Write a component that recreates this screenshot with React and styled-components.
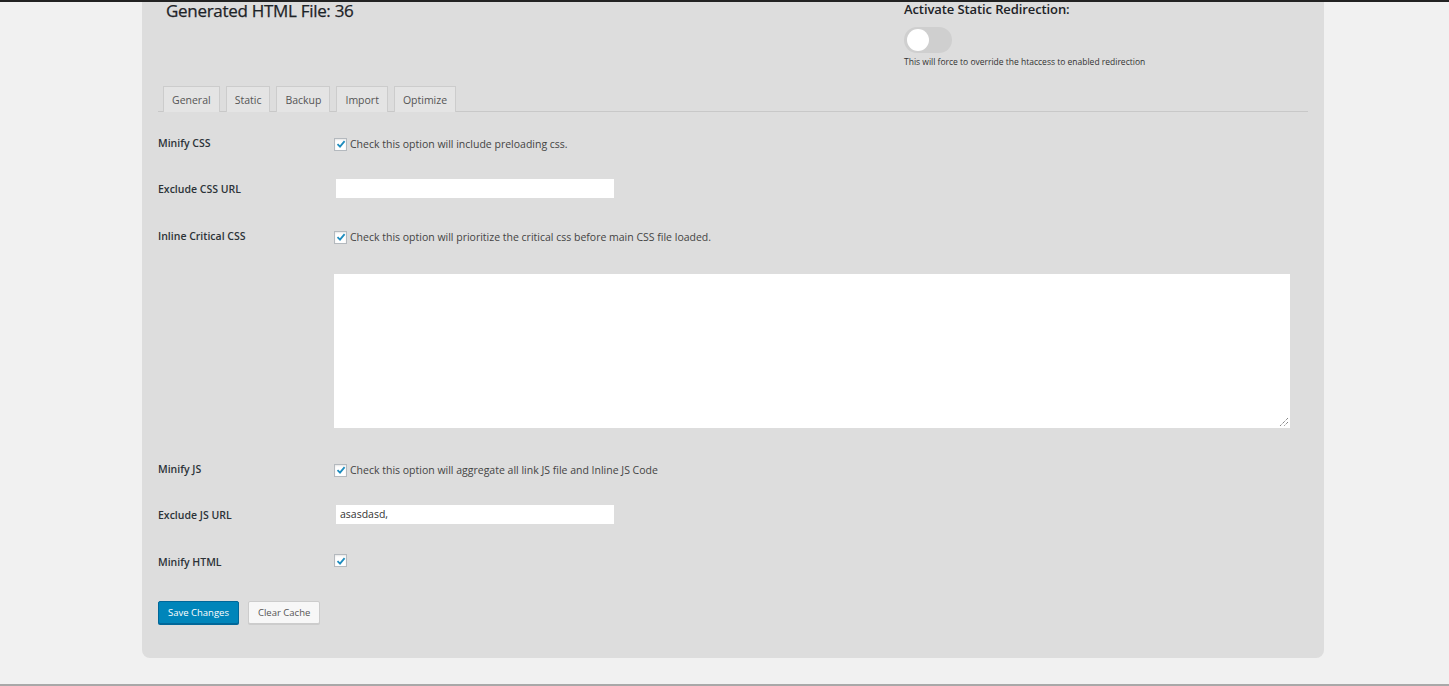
import React from "react";
import styled, { createGlobalStyle } from "styled-components";

const GlobalStyle = createGlobalStyle`
  html, body {
    margin: 0;
    padding: 0;
    background: #f1f1f1;
    font-family: "Open Sans", "Noto Sans", sans-serif;
    color: #23282d;
  }
`;

const Page = styled.div`
  height: 686px;
  box-sizing: border-box;
  border-top: 2px solid #222;
  border-bottom: 2px solid #a8a8a8;
  background: #f1f1f1;
  display: flex;
  flex-direction: column;
`;

const Panel = styled.div`
  margin-left: 142px;
  width: 1182px;
  height: 656px;
  box-sizing: border-box;
  background: #dddddd;
  border-radius: 0 0 8px 8px;
  padding: 0 16px 0 16px;
  display: flex;
  flex-direction: column;
`;

const Head = styled.div`
  display: flex;
  height: 82px;
`;

const Title = styled.h2`
  margin: 0;
  padding: 0 0 0 8px;
  width: 738px;
  font-size: 17px;
  font-weight: 400;
  line-height: 18px;
  letter-spacing: -0.3px;
  color: #1d2327;
  -webkit-text-stroke: 0.25px #1d2327;
`;

const Redirect = styled.div`
  display: flex;
  flex-direction: column;
`;

const RedirectTitle = styled.div`
  font-size: 13px;
  font-weight: 600;
  line-height: 14px;
  letter-spacing: -0.1px;
  color: #1d2327;
`;

const Toggle = styled.div`
  margin-top: 11px;
  width: 48px;
  height: 26px;
  border-radius: 13px;
  background: #cfcfcf;
  position: relative;
  &::after {
    content: "";
    position: absolute;
    left: 3px;
    top: 2px;
    width: 22px;
    height: 22px;
    border-radius: 50%;
    background: #fff;
  }
`;

const Hint = styled.div`
  margin-top: 3px;
  font-size: 8.5px;
  line-height: 12px;
  color: #333;
`;

const Tabs = styled.div`
  display: flex;
  gap: 6px;
  padding-left: 5px;
  border-bottom: 1px solid #c8c8c8;
  height: 27px;
  align-items: flex-end;
`;

const Tab = styled.div`
  height: 26px;
  box-sizing: border-box;
  padding: 0 8px;
  border: 1px solid #cccccc;
  border-bottom: none;
  background: #e4e4e4;
  font-size: 10.5px;
  color: #555;
  display: flex;
  align-items: center;
  margin-bottom: -1px;
`;

const Form = styled.div`
  display: flex;
  flex-direction: column;
  margin-top: 22px;
`;

const Row = styled.div`
  display: flex;
  align-items: flex-start;
  min-height: ${(p) => p.$h}px;
`;

const Label = styled.div`
  width: 176px;
  flex-shrink: 0;
  font-size: 10.5px;
  font-weight: 600;
  color: #2c3338;
  line-height: 18px;
`;

const Field = styled.div`
  display: flex;
  flex-direction: column;
  flex: 1;
`;

const CheckLine = styled.label`
  display: flex;
  align-items: center;
  gap: 3px;
  font-size: 10.5px;
  color: #444;
  line-height: 18px;
  padding-top: 1px;
`;

const Box = styled.span`
  width: 11px;
  height: 11px;
  border: 1px solid #b4b9be;
  background: #fff;
  display: inline-flex;
  align-items: center;
  justify-content: center;
  box-shadow: inset 0 1px 2px rgba(0, 0, 0, 0.1);
`;

const TextInput = styled.div`
  margin-left: 2px;
  margin-top: -1px;
  width: 278px;
  height: 19px;
  background: #fff;
  font-size: 10.5px;
  color: #333;
  line-height: 19px;
  padding-left: 4px;
  box-sizing: border-box;
`;

const TextArea = styled.div`
  margin-top: 28px;
  width: 956px;
  height: 154px;
  background: #fff;
  position: relative;
`;

const Grip = styled.svg`
  position: absolute;
  right: 1px;
  bottom: 1px;
`;

const Buttons = styled.div`
  display: flex;
  gap: 9px;
  margin-top: 18px;
`;

const Button = styled.div`
  height: 23px;
  box-sizing: border-box;
  padding: 0 9px;
  border-radius: 2px;
  font-size: 9.5px;
  display: flex;
  align-items: center;
  border: 1px solid ${(p) => (p.$primary ? "#006799" : "#cccccc")};
  background: ${(p) => (p.$primary ? "#0085ba" : "#f7f7f7")};
  color: ${(p) => (p.$primary ? "#fff" : "#555")};
  box-shadow: ${(p) => (p.$primary ? "0 1px 0 #006799" : "0 1px 0 #ccc")};
`;

function Check() {
  return (
    <Box>
      <svg width="10" height="10" viewBox="0 0 10 10">
        <path d="M1.5 5.2 L4 7.6 L8.6 2.2" fill="none" stroke="#1e8cbe" strokeWidth="1.8" />
      </svg>
    </Box>
  );
}

export default function App() {
  return (
    <>
      <GlobalStyle />
      <Page>
        <Panel>
          <Head>
            <Title>Generated HTML File: 36</Title>
            <Redirect>
              <RedirectTitle>Activate Static Redirection:</RedirectTitle>
              <Toggle />
              <Hint>This will force to override the htaccess to enabled redirection</Hint>
            </Redirect>
          </Head>
          <Tabs>
            {["General", "Static", "Backup", "Import", "Optimize"].map((t) => (
              <Tab key={t}>{t}</Tab>
            ))}
          </Tabs>
          <Form>
            <Row $h={46}>
              <Label>Minify CSS</Label>
              <Field>
                <CheckLine>
                  <Check /> Check this option will include preloading css.
                </CheckLine>
              </Field>
            </Row>
            <Row $h={47}>
              <Label>Exclude CSS URL</Label>
              <Field>
                <TextInput />
              </Field>
            </Row>
            <Row $h={233}>
              <Label>Inline Critical CSS</Label>
              <Field>
                <CheckLine>
                  <Check /> Check this option will prioritize the critical css before main CSS file loaded.
                </CheckLine>
                <TextArea>
                  <Grip width="10" height="10" viewBox="0 0 10 10">
                    <path d="M9 1 L1 9 M9 5 L5 9" stroke="#555" strokeWidth="1" strokeDasharray="1 1" />
                  </Grip>
                </TextArea>
              </Field>
            </Row>
            <Row $h={46}>
              <Label>Minify JS</Label>
              <Field>
                <CheckLine>
                  <Check /> Check this option will aggregate all link JS file and Inline JS Code
                </CheckLine>
              </Field>
            </Row>
            <Row $h={47}>
              <Label>Exclude JS URL</Label>
              <Field>
                <TextInput>asasdasd,</TextInput>
              </Field>
            </Row>
            <Row $h={30}>
              <Label>Minify HTML</Label>
              <Field>
                <CheckLine>
                  <Check />
                </CheckLine>
              </Field>
            </Row>
          </Form>
          <Buttons>
            <Button $primary>Save Changes</Button>
            <Button>Clear Cache</Button>
          </Buttons>
        </Panel>
      </Page>
    </>
  );
}
